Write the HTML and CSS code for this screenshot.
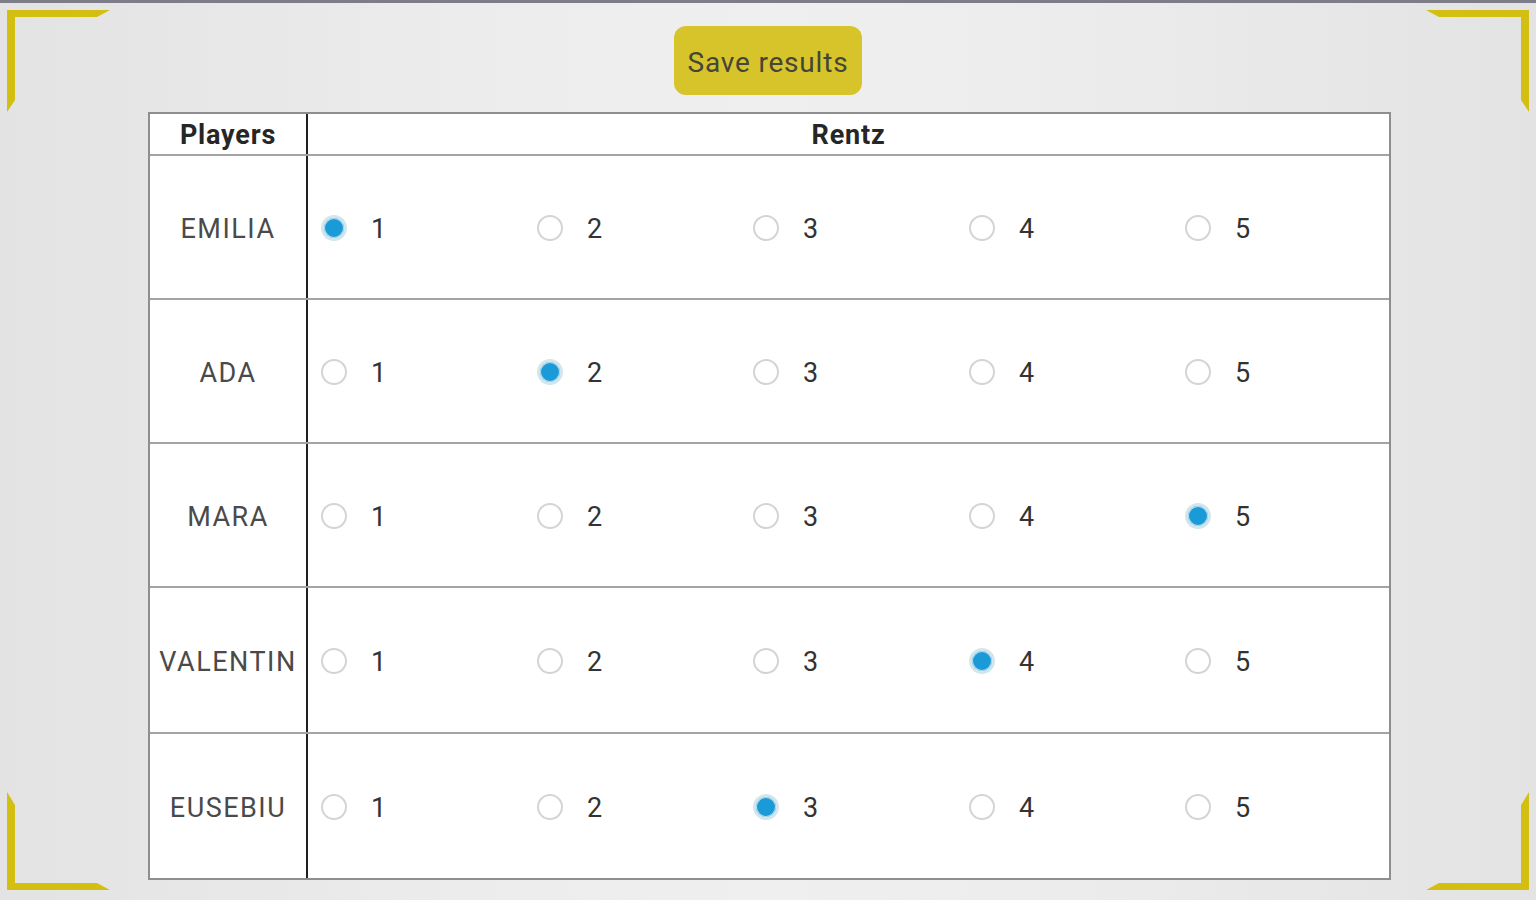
FILE: index.html
```html
<!DOCTYPE html>
<html>
<head>
<meta charset="utf-8">
<link rel="stylesheet" href="styles.css">
</head>
<body>
<div class="topbar"></div>
<svg class="corners" width="1536" height="900" viewBox="0 0 1536 900">
  <polygon points="7,10 110,10 97,17 15,17 15,100 7,112" />
  <polygon points="1529,10 1426,10 1439,17 1521,17 1521,100 1529,112" />
  <polygon points="7,890 110,890 97,883 15,883 15,805 7,792" />
  <polygon points="1529,890 1426,890 1439,883 1521,883 1521,805 1529,792" />
</svg>
<main class="screen">
  <button class="save">Save results</button>
  <div class="board">
    <div class="row head">
      <div class="name">Players</div>
      <div class="opts title">Rentz</div>
    </div>
    <div class="row r1">
      <div class="name">EMILIA</div>
      <div class="opts">
        <div class="opt"><span class="radio on"></span><span class="num">1</span></div>
        <div class="opt"><span class="radio"></span><span class="num">2</span></div>
        <div class="opt"><span class="radio"></span><span class="num">3</span></div>
        <div class="opt"><span class="radio"></span><span class="num">4</span></div>
        <div class="opt"><span class="radio"></span><span class="num">5</span></div>
      </div>
    </div>
    <div class="row r2">
      <div class="name">ADA</div>
      <div class="opts">
        <div class="opt"><span class="radio"></span><span class="num">1</span></div>
        <div class="opt"><span class="radio on"></span><span class="num">2</span></div>
        <div class="opt"><span class="radio"></span><span class="num">3</span></div>
        <div class="opt"><span class="radio"></span><span class="num">4</span></div>
        <div class="opt"><span class="radio"></span><span class="num">5</span></div>
      </div>
    </div>
    <div class="row r3">
      <div class="name">MARA</div>
      <div class="opts">
        <div class="opt"><span class="radio"></span><span class="num">1</span></div>
        <div class="opt"><span class="radio"></span><span class="num">2</span></div>
        <div class="opt"><span class="radio"></span><span class="num">3</span></div>
        <div class="opt"><span class="radio"></span><span class="num">4</span></div>
        <div class="opt"><span class="radio on"></span><span class="num">5</span></div>
      </div>
    </div>
    <div class="row r4">
      <div class="name">VALENTIN</div>
      <div class="opts">
        <div class="opt"><span class="radio"></span><span class="num">1</span></div>
        <div class="opt"><span class="radio"></span><span class="num">2</span></div>
        <div class="opt"><span class="radio"></span><span class="num">3</span></div>
        <div class="opt"><span class="radio on"></span><span class="num">4</span></div>
        <div class="opt"><span class="radio"></span><span class="num">5</span></div>
      </div>
    </div>
    <div class="row r5">
      <div class="name">EUSEBIU</div>
      <div class="opts">
        <div class="opt"><span class="radio"></span><span class="num">1</span></div>
        <div class="opt"><span class="radio"></span><span class="num">2</span></div>
        <div class="opt"><span class="radio on"></span><span class="num">3</span></div>
        <div class="opt"><span class="radio"></span><span class="num">4</span></div>
        <div class="opt"><span class="radio"></span><span class="num">5</span></div>
      </div>
    </div>
  </div>
</main>
</body>
</html>
```
FILE: styles.css
```css
* { box-sizing: border-box; }
html, body { margin: 0; padding: 0; }
body {
  width: 1536px;
  height: 900px;
  overflow: hidden;
  position: relative;
  font-family: Roboto, "Liberation Sans", sans-serif;
  background: linear-gradient(90deg, #e3e3e3 0%, #ececec 30%, #efefef 50%, #ececec 70%, #e3e3e3 100%);
}
.topbar {
  height: 3px;
  background: #7d7c89;
}
.corners {
  position: absolute;
  left: 0;
  top: 0;
  pointer-events: none;
}
.corners polygon { fill: #d3bf12; }
.screen {
  display: flex;
  flex-direction: column;
  align-items: center;
  padding-top: 23px;
}
.save {
  width: 188px;
  height: 69px;
  border: none;
  border-radius: 12px;
  background: #d6c42a;
  color: #45453a;
  font-family: Roboto, "Liberation Sans", sans-serif;
  font-size: 28px;
  letter-spacing: 0.8px;
  padding: 3px 0 0 0;
  margin-bottom: 17px;
}
.board {
  width: 1243px;
  margin-left: 3px;
  background: #fff;
  border: 2px solid #8e8e8e;
}
.row {
  display: flex;
  border-bottom: 2px solid #a3a3a3;
}
.row.r5 { border-bottom: none; }
.head { height: 42px; }
.r1, .r2, .r3 { height: 144px; }
.r4 { height: 146px; }
.r5 { height: 144px; }
.name {
  width: 158px;
  flex: none;
  border-right: 2px solid #1f1f1f;
  display: flex;
  align-items: center;
  justify-content: center;
  padding-top: 4px;
  font-size: 27px;
  color: #4a4a4a;
  letter-spacing: 1.5px;
}
.head .name, .title {
  font-weight: bold;
  color: #262626;
  font-size: 27px;
  letter-spacing: 0.8px;
  padding-top: 2px;
}
.opts {
  flex: 1;
  display: flex;
  align-items: center;
}
.title { justify-content: center; }
.opt {
  width: 216px;
  flex: none;
  display: flex;
  align-items: center;
  padding-left: 13px;
  padding-top: 2px;
}
.radio {
  width: 26px;
  height: 26px;
  border-radius: 50%;
  border: 2px solid #d4d4d4;
  background: #fff;
  flex: none;
}
.radio.on {
  border-color: #d2e6ee;
  border-width: 3px;
  background: #1a9ad6;
  box-shadow: inset 0 0 0 1px #b9dced;
}
.num {
  margin-left: 24px;
  padding-top: 2px;
  font-size: 27px;
  color: #333;
}
```
